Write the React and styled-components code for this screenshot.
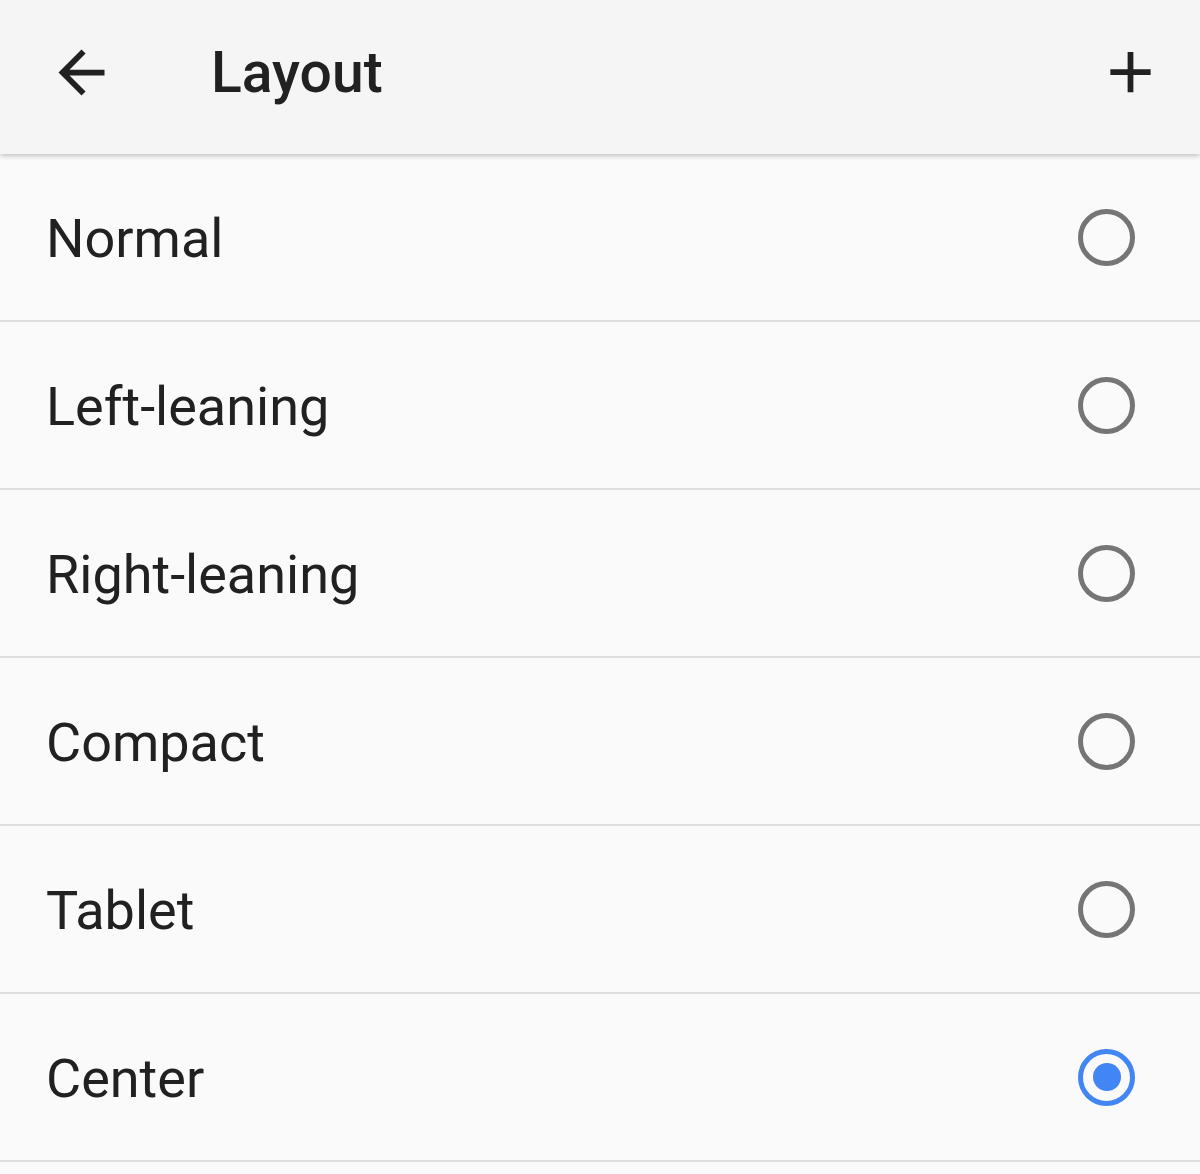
import { styled, createGlobalStyle } from "styled-components";
import { useState } from "react";

const GlobalStyle = createGlobalStyle`
    html, body {
        margin:0;
        padding:0;
        background-color:#fafafa;
        font-family:Roboto, "Noto Sans", sans-serif;
    }
`

const Page = styled.div`
    width:1200px;
    min-height:1174px;
    background-color:#fafafa;
`

const Toolbar = styled.div`
    position:relative;
    z-index:1;
    box-sizing:border-box;
    height:154px;
    display:flex;
    flex-direction:row;
    align-items:center;
    padding:0 35px 10px 47px;
    background-color:#f5f5f5;
    box-shadow:0 2px 5px rgba(0,0,0,.22);
`

const IconButton = styled.div`
    width:69px;
    height:69px;
    display:flex;
    align-items:center;
    justify-content:center;
`

const Title = styled.div`
    flex:1;
    margin-left:95px;
    font-size:57px;
    font-weight:500;
    color:#212121;
`

const List = styled.div`
    display:flex;
    flex-direction:column;
`

const Row = styled.div`
    height:166px;
    display:flex;
    flex-direction:row;
    align-items:center;
    justify-content:space-between;
    padding:0 65px 0 46px;
    border-bottom:solid 2px #dedede;
    cursor:pointer;
`

const Label = styled.div`
    font-size:54px;
    color:#212121;
    margin-top:2px;
`

const Radio = styled.div`
    box-sizing:border-box;
    width:57px;
    height:57px;
    border-radius:50%;
    border:solid 5px ${(p)=>p.$checked ? "#4285f4" : "#757575"};
    display:flex;
    align-items:center;
    justify-content:center;
`

const Dot = styled.div`
    width:28px;
    height:28px;
    border-radius:50%;
    background-color:#4285f4;
`

const options = ["Normal","Left-leaning","Right-leaning","Compact","Tablet","Center"];

const App = ()=>{

    const [selected,setSelected] = useState("Center");

    return(
        <>
            <GlobalStyle/>
            <Page>
                <Toolbar>
                    <IconButton>
                        <svg width="69" height="69" viewBox="0 0 24 24" fill="#212121">
                            <path d="M20 11H7.83l5.59-5.59L12 4l-8 8 8 8 1.41-1.41L7.83 13H20v-2z"/>
                        </svg>
                    </IconButton>
                    <Title>Layout</Title>
                    <IconButton>
                        <svg width="70" height="70" viewBox="0 0 24 24" fill="#212121">
                            <path d="M19 13h-6v6h-2v-6H5v-2h6V5h2v6h6v2z"/>
                        </svg>
                    </IconButton>
                </Toolbar>

                <List>
                    {
                        options.map((name)=>(
                            <Row key={name} onClick={()=>setSelected(name)}>
                                <Label>{name}</Label>
                                <Radio $checked={selected == name}>
                                    {selected == name && <Dot/>}
                                </Radio>
                            </Row>
                        ))
                    }
                </List>
            </Page>
        </>
    )
}

export default App;
